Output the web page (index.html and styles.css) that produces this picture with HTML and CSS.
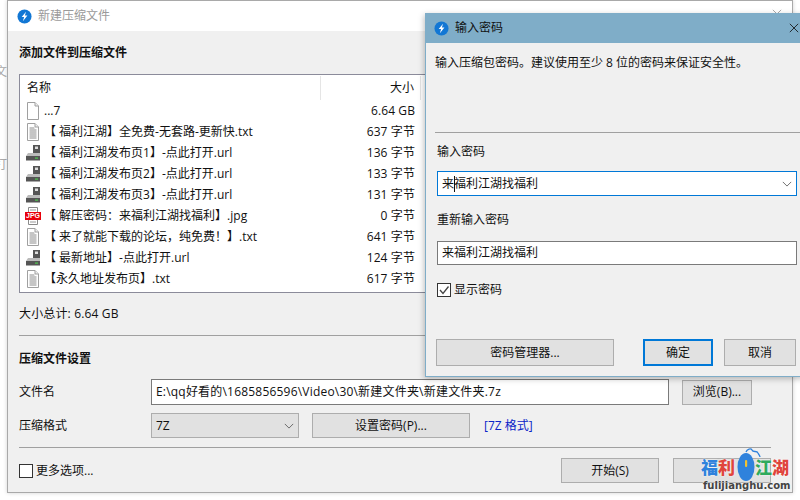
FILE: index.html
```html
<!DOCTYPE html>
<html lang="zh-CN">
<head>
<meta charset="utf-8">
<title>新建压缩文件</title>
<link rel="stylesheet" href="styles.css">
</head>
<body>
<svg class="defs" width="0" height="0">
  <symbol id="logo" viewBox="0 0 16 16"><circle cx="8" cy="8" r="7.5" fill="#1277d4"/><path d="M9.600 2.800 5 8.600h2.600L6.300 13l4.800-6H8.400z" fill="#fff"/></symbol>
  <symbol id="blank" viewBox="0 0 16 18"><path d="M2.500.5h7.500l3.500 3.500v13.500h-11z" fill="#fff" stroke="#a0a0a0"/><path d="M10 .5v3.500h3.500" fill="#eee" stroke="#a0a0a0"/></symbol>
  <symbol id="txt" viewBox="0 0 16 18"><path d="M2.500.5h7.500l3.500 3.500v13.500h-11z" fill="#fff" stroke="#a0a0a0"/><path d="M10 .5v3.500h3.500" fill="#eee" stroke="#a0a0a0"/><path d="M4.500 5h5M4.500 7h7M4.500 9h7M4.500 11h7M4.500 13h7M4.500 15h7" stroke="#8c8c8c"/></symbol>
  <symbol id="url" viewBox="0 0 16 18"><rect x="8" y="1" width="7" height="8" fill="#555"/><rect x="10" y="2.500" width="3" height="2.500" fill="#ddd"/><path d="M3 9h12v3H1z" fill="#bbb"/><rect x="1" y="12" width="14" height="4.500" fill="#555"/><rect x="10" y="13.500" width="3" height="1.200" fill="#4fc94f"/></symbol>
  <symbol id="jpg" viewBox="0 0 16 18"><path d="M3.500.5h9v17h-9z" fill="#fff" stroke="#8a8a8a"/><path d="M5 3h6M5 15h6" stroke="#999"/><rect x="0" y="5" width="16" height="8" fill="#e8000b"/></symbol>
</svg>

<div class="desk-a">文</div>
<div class="desk-b">打</div>

<section class="win main">
  <header class="titlebar main-bar">
    <svg class="logo"><use href="#logo"/></svg>
    <span class="title-muted">新建压缩文件</span>
    <span class="spacer"></span>
    <svg class="x x-muted" viewBox="0 0 12 12"><path d="M1 1l10 10M11 1 1 11" stroke="#999" fill="none"/></svg>
  </header>
  <div class="main-body">
    <h2 class="head">添加文件到压缩文件</h2>
    <div class="list">
      <div class="row list-head"><span class="h-name">名称</span><span class="h-size">大小</span></div>
      <div class="row"><svg class="ico"><use href="#blank"/></svg><span class="c-name">...7</span><span class="c-size">6.64 GB</span></div>
      <div class="row"><svg class="ico"><use href="#txt"/></svg><span class="c-name">【 福利江湖】全免费-无套路-更新快.txt</span><span class="c-size">637 字节</span></div>
      <div class="row"><svg class="ico"><use href="#url"/></svg><span class="c-name">【 福利江湖发布页1】-点此打开.url</span><span class="c-size">136 字节</span></div>
      <div class="row"><svg class="ico"><use href="#url"/></svg><span class="c-name">【 福利江湖发布页2】-点此打开.url</span><span class="c-size">133 字节</span></div>
      <div class="row"><svg class="ico"><use href="#url"/></svg><span class="c-name">【 福利江湖发布页3】-点此打开.url</span><span class="c-size">131 字节</span></div>
      <div class="row"><span class="jpg-ico"><svg class="ico"><use href="#jpg"/></svg><b class="jpg-tag">JPG</b></span><span class="c-name">【 解压密码：来福利江湖找福利】.jpg</span><span class="c-size">0 字节</span></div>
      <div class="row"><svg class="ico"><use href="#txt"/></svg><span class="c-name">【 来了就能下载的论坛，纯免费！】.txt</span><span class="c-size">641 字节</span></div>
      <div class="row"><svg class="ico"><use href="#url"/></svg><span class="c-name">【 最新地址】-点此打开.url</span><span class="c-size">124 字节</span></div>
      <div class="row"><svg class="ico"><use href="#txt"/></svg><span class="c-name">【永久地址发布页】.txt</span><span class="c-size">617 字节</span></div>
    </div>
    <p class="total">大小总计: 6.64 GB</p>
    <hr class="rule rule-a">
    <h2 class="head head-b">压缩文件设置</h2>
    <div class="form">
      <label class="f-label">文件名</label>
      <div class="field path">E:\qq好看的\1685856596\Video\30\新建文件夹\新建文件夹.7z</div>
      <button class="btn browse">浏览(B)...</button>
    </div>
    <div class="form form-b">
      <label class="f-label">压缩格式</label>
      <div class="select"><span>7Z</span><svg class="chev" viewBox="0 0 12 7"><path d="M1 1l5 5 5-5" fill="none" stroke="#555"/></svg></div>
      <button class="btn setpw">设置密码(P)...</button>
      <span class="link">[7Z 格式]</span>
    </div>
    <hr class="rule rule-b">
    <div class="foot">
      <label class="check"><span class="box"></span>更多选项...</label>
      <span class="spacer"></span>
      <button class="btn go">开始(S)</button>
      <button class="btn go"></button>
    </div>
  </div>
</section>

<section class="win dialog">
  <header class="titlebar dlg-bar">
    <svg class="logo"><use href="#logo"/></svg>
    <span>输入密码</span>
    <span class="spacer"></span>
    <svg class="x" viewBox="0 0 12 12"><path d="M1 1l10 10M11 1 1 11" stroke="#111" fill="none"/></svg>
  </header>
  <div class="dlg-intro">输入压缩包密码。建议使用至少 8 位的密码来保证安全性。</div>
  <hr class="rule dlg-rule">
  <div class="dlg-body">
    <div class="lbl">输入密码</div>
    <div class="combo"><span class="ctext"><span>来</span><i class="caret"></i><span>福利江湖找福利</span></span><svg class="chev" viewBox="0 0 12 7"><path d="M1 1l5 5 5-5" fill="none" stroke="#555"/></svg></div>
    <div class="lbl lbl-b">重新输入密码</div>
    <div class="pw">来福利江湖找福利</div>
    <label class="check check-b"><span class="box"><svg viewBox="0 0 12 12"><path d="M2 6l3 3.500L10.500 2.500" fill="none" stroke="#444" stroke-width="1.300"/></svg></span>显示密码</label>
    <div class="dlg-btns">
      <button class="btn mgr">密码管理器...</button>
      <span class="spacer"></span>
      <button class="btn ok">确定</button>
      <button class="btn cancel">取消</button>
    </div>
  </div>
</section>

<div class="mark">
  <div class="mark-top">
    <span class="m-blue">福</span><span class="m-red">利</span>
    <svg class="mouse" viewBox="0 0 24 33"><path d="M9 4C10 1 14 0 15 2 16 5 20 2 21 5 22 7 23 8 23 9" fill="none" stroke="#2f82dc" stroke-width="1.300"/><ellipse cx="9" cy="19" rx="8.500" ry="14" fill="#2f82dc"/><rect x="8" y="12" width="2.200" height="7" rx="1.100" fill="#f2c230"/></svg>
    <span class="m-green">江</span><span class="m-red">湖</span>
  </div>
  <div class="mark-url">fulijianghu.com</div>
</div>
</body>
</html>
```
FILE: styles.css
```css
* { box-sizing: border-box; }
html, body { margin: 0; height: 100%; }
body {
  position: relative;
  width: 800px;
  height: 500px;
  overflow: hidden;
  background: #fff;
  font: 12px/16px "Open Sans", "Noto Sans CJK SC", sans-serif;
  color: #111;
}
.defs { position: absolute; }
.spacer { flex: 1; }
.desk-a, .desk-b { position: absolute; left: -5px; color: #aaa; font-size: 12px; }
.desk-a { top: 64px; }
.desk-b { top: 157px; }

.win { position: absolute; display: flex; flex-direction: column; }
.main {
  left: 7px; top: 0; width: 786px; height: 493px;
  background: #f0f0f0;
  border: 1px solid #a9a9a9;
  box-shadow: 0 0 4px rgba(0,0,0,.18);
}
.titlebar { display: flex; align-items: center; flex: none; }
.main-bar { height: 30px; background: #fff; padding: 0 0 0 9px; }
.logo { width: 15px; height: 15px; margin-right: 6px; flex: none; }
.title-muted { color: #9a9a9a; }
.x { width: 10px; height: 10px; margin-right: 6px; flex: none; }
.x-muted { margin-right: 10px; margin-top: -4px; }

.main-body { padding: 0 21px 0 11px; display: flex; flex-direction: column; flex: 1; }
.head { margin: 14px 0 0; font-size: 12px; line-height: 16px; font-weight: 700; }
.list {
  margin-top: 13px;
  height: 219px;
  background: #fff;
  border: 1px solid #8b8b9a;
  padding-left: 7px;
}
.row { display: flex; align-items: center; height: 21px; width: 388px; }
.list-head { height: 25px; width: 394px; }
.h-name { flex: 0 0 294px; height: 24px; line-height: 24px; border-right: 1px solid #e5e5e5; }
.h-size { flex: 1; height: 24px; line-height: 24px; padding-right: 6px; text-align: right; border-right: 1px solid #e5e5e5; }
.ico { width: 16px; height: 18px; flex: none; margin: 0 2px 0 -2px; }
.c-name { white-space: nowrap; padding-left: 1px; }
.c-size { margin-left: auto; white-space: nowrap; letter-spacing: .1px; }
.jpg-ico { position: relative; width: 16px; height: 18px; flex: none; }
.jpg-tag {
  position: absolute; left: -2px; top: 5px; width: 16px;
  color: #fff; font: 700 7px/8px "Liberation Sans", sans-serif; text-align: center;
}
.total { margin: 13px 0 0; letter-spacing: .15px; }
.rule { border: 0; height: 1px; background: #a0a0a0; margin: 0; flex: none; }
.rule-a { margin-top: 13px; }
.head-b { margin-top: 15px; }
.form { display: flex; align-items: center; margin-top: 12px; }
.form-b { margin-top: 8px; }
.f-label { width: 132px; flex: none; }
.field {
  width: 518px; height: 26px; line-height: 22px;
  background: #fff; border: 1px solid #7a7a7a; padding: 1px 4px; white-space: nowrap;
  letter-spacing: .2px;
}
.btn {
  font: inherit; color: #111; background: #e1e1e1;
  border: 1px solid #adadad; padding: 0; height: 25px;
}
.browse { width: 70px; margin-left: 13px; }
.select {
  width: 148px; height: 25px; display: flex; align-items: center; justify-content: space-between;
  background: #e1e1e1; border: 1px solid #adadad; padding: 0 4px;
}
.chev { width: 10px; height: 6px; flex: none; }
.setpw { width: 158px; margin-left: 13px; }
.link { margin-left: 14px; color: #0a24c8; }
.rule-b { margin-top: 9px; }
.foot { display: flex; align-items: center; margin-top: 10px; }
.check { display: flex; align-items: center; }
.box { width: 14px; height: 14px; background: #fff; border: 1px solid #333; margin-right: 3px; display: block; flex: none; }
.box svg { display: block; width: 12px; height: 12px; }
.go { width: 98px; height: 25px; margin-left: 14px; }

.dialog {
  left: 425px; top: 13px; width: 380px; height: 364px;
  background: #f0f0f0;
  border: 1px solid #7fadc8;
  box-shadow: -1px 2px 6px rgba(0,0,0,.25);
}
.dlg-bar { height: 30px; background: #7fadc8; padding: 0 0 0 9px; margin: -1px -1px 0; }
.dlg-intro { padding: 12px 0 0 9px; height: 89px; white-space: nowrap; }
.dlg-rule { margin-left: 9px; }
.dlg-body { padding: 11px 8px 0 11px; display: flex; flex-direction: column; }
.lbl { height: 16px; }
.lbl-b { margin-top: 16px; }
.combo {
  width: 360px; height: 25px; margin-top: 11px; background: #fff;
  border: 1px solid #0078d7; display: flex; align-items: center; justify-content: space-between; padding: 0 4px;
}
.ctext { display: flex; align-items: center; }
.caret { width: 1px; height: 16px; background: #111; flex: none; margin-right: -1px; }
.pw {
  width: 360px; height: 24px; line-height: 22px; margin-top: 13px;
  background: #fff; border: 1px solid #7a7a7a; padding: 0 4px;
}
.check-b { margin-top: 17px; }
.dlg-btns { display: flex; margin: 41px 0 0 -1px; width: 360px; }
.mgr { width: 178px; height: 27px; }
.ok { width: 70px; height: 27px; border: 2px solid #0078d7; }
.cancel { width: 72px; height: 27px; margin-left: 11px; }

.mark { position: absolute; left: 701px; top: 447px; width: 94px; }
.mark-top { display: flex; align-items: center; height: 34px; font: 900 17px/18px "Noto Sans CJK SC", sans-serif; text-shadow: 0 0 2px #fff; }
.mark-top span { margin-top: 5px; }
.m-blue { color: #2f82dc; }
.m-red { color: #e0453c; }
.m-green { color: #2faa5c; }
.mouse { width: 24px; height: 33px; margin: 0 -6px 0 2px; flex: none; }
.mark-url { font: 700 10px/12px "DejaVu Sans", sans-serif; color: #444; margin: -1px 0 0 2px; white-space: nowrap; text-shadow: 0 0 2px #fff; }
```
